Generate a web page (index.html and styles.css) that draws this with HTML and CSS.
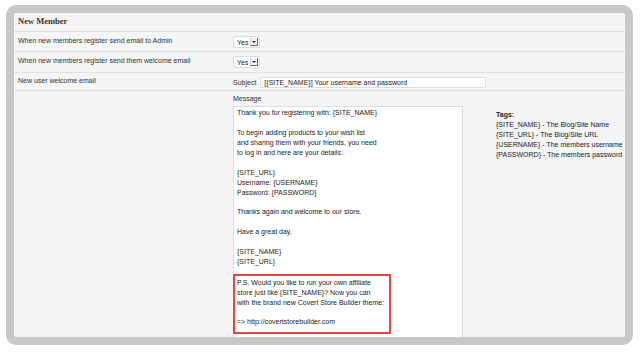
FILE: index.html
```html
<!DOCTYPE html>
<html lang="en">
<head>
    <meta charset="UTF-8">
    <meta name="viewport" content="width=device-width, initial-scale=1.0">
    <title>New Member</title>
    <link rel="stylesheet" href="styles.css">
</head>
<body>
    <div class="frame">
        <div class="section-title">New Member</div>

        <div class="row row-admin">
            <div class="label">When new members register send email to Admin</div>
            <div class="field">
                <span class="select">Yes<span class="select-arrow"></span></span>
            </div>
        </div>

        <div class="row row-welcome">
            <div class="label">When new members register send them welcome email</div>
            <div class="field">
                <span class="select">Yes<span class="select-arrow"></span></span>
            </div>
        </div>

        <div class="row row-subject">
            <div class="label">New user welcome email</div>
            <div class="field field-inline">
                <span class="field-label">Subject</span>
                <span class="input">[{SITE_NAME}] Your username and password</span>
            </div>
        </div>

        <div class="row row-message">
            <div class="label"></div>
            <div class="field">
                <div class="field-label">Message</div>
                <div class="message-wrap">
                    <div class="textarea">
                        <p>Thank you for registering with: {SITE_NAME}</p>
                        <p>To begin adding products to your wish list<br>and sharing them with your friends, you need<br>to log in and here are your details:</p>
                        <p>{SITE_URL}<br>Username: {USERNAME}<br>Password: {PASSWORD}</p>
                        <p>Thanks again and welcome to our store.</p>
                        <p>Have a great day,</p>
                        <p class="last">{SITE_NAME}<br>{SITE_URL}</p>
                        <div class="highlight">
                            <p>P.S. Would you like to run your own affiliate<br>store just like {SITE_NAME}? Now you can<br>with the brand new Covert Store Builder theme:</p>
                            <p class="last">=&gt; http://covertstorebuilder.com</p>
                        </div>
                    </div>
                    <div class="tags">
                        <strong>Tags:</strong><br>
                        {SITE_NAME} - The Blog/Site Name<br>
                        {SITE_URL} - The Blog/Site URL<br>
                        {USERNAME} - The members username<br>
                        {PASSWORD} - The members password
                    </div>
                </div>
            </div>
        </div>
    </div>
</body>
</html>
```

FILE: styles.css
```css
body {
    margin: 0;
    background: #fff;
    font-family: 'Liberation Sans', Arial, sans-serif;
    font-size: 7px;
    color: #333;
}

.frame {
    margin: 5px 0 0 6px;
    width: 627px;
    height: 340px;
    box-sizing: border-box;
    border: 8px solid #c8c8c8;
    border-radius: 10px;
    background: #f5f5f5;
    overflow: hidden;
    white-space: nowrap;
}

.section-title {
    height: 19px;
    box-sizing: border-box;
    padding: 3px 0 0 4px;
    line-height: 11px;
    font-family: 'Liberation Serif', 'Times New Roman', serif;
    font-size: 8.5px;
    font-weight: bold;
    color: #333;
    border-bottom: 1px solid #e1e1e1;
}

.row {
    display: flex;
    align-items: flex-start;
    border-bottom: 1px solid #e1e1e1;
}

.row-admin { height: 19px; }
.row-welcome { height: 20px; }
.row-subject { height: 17px; }
.row-message { border-bottom: none; }

.label {
    width: 215px;
    padding: 4px 0 0 4px;
    line-height: 9px;
}

.row-subject .label { padding-top: 3px; }

.field {
    padding-top: 4px;
}

.field-inline {
    display: flex;
    align-items: center;
    gap: 4px;
}

.field-label {
    line-height: 9px;
}

.row-message .field-label {
    line-height: 8px;
    margin-bottom: 3px;
}

/* fake select box */
.select {
    display: flex;
    align-items: center;
    justify-content: space-between;
    width: 27px;
    height: 12px;
    box-sizing: border-box;
    padding: 0 1px 0 3px;
    background: #fff;
    border: 1px solid #dcdcdc;
    border-radius: 2px;
    color: #222;
}

.select-arrow {
    position: relative;
    width: 6px;
    height: 7px;
    background: #f4f4f4;
    border-left: 1px solid #d0d0d0;
    border-right: 1px solid #666;
    border-bottom: 1px solid #666;
}

.select-arrow::after {
    content: '';
    position: absolute;
    left: 1px;
    top: 3px;
    border-left: 2px solid transparent;
    border-right: 2px solid transparent;
    border-top: 2px solid #222;
}

.input {
    display: block;
    width: 226px;
    height: 11px;
    box-sizing: border-box;
    padding: 0 3px;
    line-height: 9px;
    background: #fff;
    border: 1px solid #dcdcdc;
    border-radius: 2px;
    color: #222;
}

.message-wrap {
    display: flex;
    align-items: flex-start;
}

.textarea {
    width: 230px;
    height: 260px;
    box-sizing: border-box;
    padding: 1.35px 3px 0 3px;
    background: #fff;
    border: 1px solid #dcdcdc;
    line-height: 9.9px;
    color: #222;
}

.textarea p {
    margin: 0 0 9.9px;
}

.textarea p.last {
    margin-bottom: 0;
}

.highlight {
    width: 158px;
    box-sizing: border-box;
    margin: 7.35px 0 0 -4px;
    padding: 1.75px 0 5px 2px;
    border: 2px solid #e8473d;
}

.tags {
    margin: 4px 0 0 33px;
    line-height: 10px;
    color: #222;
}
```
